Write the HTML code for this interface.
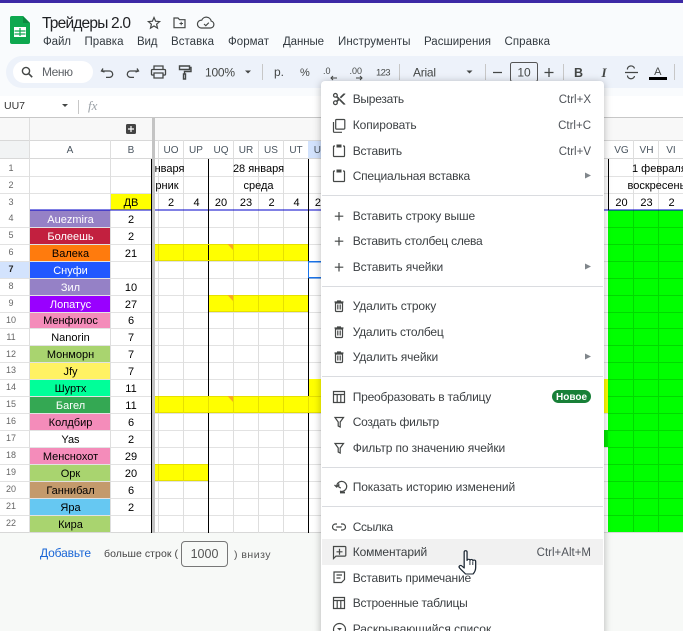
<!DOCTYPE html>
<html lang="ru"><head><meta charset="utf-8"><title>Трейдеры 2.0</title>
<style>
html,body{margin:0;padding:0;width:683px;height:631px;overflow:hidden;background:#f9fbfd}
svg{display:block;font-family:"Liberation Sans",sans-serif;filter:blur(.3px)}
.c{shape-rendering:crispEdges}
.m{font-size:12px;fill:#3c4043}
.s{font-size:11.5px;fill:#50545a;text-anchor:end}
.b{font-size:11.5px;fill:#333a40}
.n{font-size:9px;fill:#666;text-anchor:middle}
.h{font-size:10px;fill:#4a5560;text-anchor:middle}
.t{font-size:11px;fill:#000;text-anchor:middle}
.w{font-size:11px;fill:#fff;text-anchor:middle}
.i{fill:none;stroke:#444746;stroke-width:1.2}
.a{fill:#80868b}
</style></head><body>
<svg width="683" height="631" viewBox="0 0 683 631" xmlns="http://www.w3.org/2000/svg">
<!-- chrome backgrounds -->
<g class="c">
<rect width="683" height="631" fill="#f9fbfd"/>
<rect width="683" height="3" fill="#3d2aa6"/>
<rect x="0" y="96" width="683" height="21" fill="#fff"/>
<rect x="0" y="117" width="683" height="416" fill="#fff"/>
<rect x="0" y="533" width="683" height="98" fill="#f7f9f7"/>
<rect x="0" y="117" width="683" height="1" fill="#c7c7c7"/>
<rect x="0" y="118" width="683" height="22" fill="#f8f8f8"/>
<rect x="0" y="140" width="29" height="19" fill="#f1f3f4"/>
<rect x="308" y="140" width="14" height="19" fill="#d3e3fd"/>
<rect x="0" y="261" width="29" height="17" fill="#d3e3fd"/>
</g>
<rect x="6" y="56" width="700" height="32" rx="16" fill="#edf2fa"/>
<rect x="13" y="61" width="80" height="22" rx="11" fill="#fff"/>
<!-- logo -->
<path d="M12 16h11l7 7v19a2 2 0 0 1-2 2H12a2 2 0 0 1-2-2V18a2 2 0 0 1 2-2z" fill="#0ea84f"/>
<path d="M23 16l7 7h-7z" fill="#0b8a40"/>
<path d="M14 27h12v10H14z" fill="#fff"/>
<path d="M14.5 31h11M14.5 34h11M20 28v8" stroke="#0ea84f" stroke-width="1.2"/>
<text x="42" y="28" font-size="15.5px" fill="#202124" textLength="89">Трейдеры 2.0</text>
<!-- star folder cloud -->
<path d="M154 17.500l1.600 3.700 4 .35-3 2.650.9 3.900-3.500-2.100-3.500 2.100.9-3.900-3-2.650 4-.35z" fill="none" stroke="#444746" stroke-width="1.200"/>
<path d="M174 18h4l1.500 1.700h5.500v8h-11z" fill="none" stroke="#444746" stroke-width="1.200"/>
<path d="M179.500 23.500h3.500M181.200 21.800v3.500" stroke="#444746" stroke-width="1"/>
<path d="M201 28h9.500a3.500 3.500 0 0 0 .7-6.900 5 5 0 0 0-9.500-.9 3.900 3.900 0 0 0-.7 7.800z" fill="none" stroke="#444746" stroke-width="1.200"/>
<path d="M204 24l1.800 1.700 3-3" fill="none" stroke="#444746" stroke-width="1.100"/>
<!-- menu bar -->
<g class="b">
<text x="43" y="45" textLength="28">Файл</text>
<text x="84.500" y="45" textLength="39">Правка</text>
<text x="137" y="45" textLength="20.500">Вид</text>
<text x="171" y="45" textLength="43">Вставка</text>
<text x="228" y="45" textLength="41">Формат</text>
<text x="283" y="45" textLength="41">Данные</text>
<text x="338" y="45" textLength="72.500">Инструменты</text>
<text x="424" y="45" textLength="67">Расширения</text>
<text x="504.500" y="45" textLength="45.500">Справка</text>
</g>
<!-- toolbar -->
<circle cx="26" cy="71" r="3.600" fill="none" stroke="#444746" stroke-width="1.400"/>
<path d="M28.600 73.600l3.600 3.600" stroke="#444746" stroke-width="1.600"/>
<text x="42" y="76" font-size="12px" fill="#5f6368" textLength="31">Меню</text>
<path d="M103.500 69.500l-1.500 2.500 3 1M102.500 72h7.500a3.200 3.200 0 0 1 0 6.400h-3.500" fill="none" stroke="#444746" stroke-width="1.300" transform="translate(-.5 -1)"/>
<path d="M136.500 69.500l1.500 2.500-3 1M137.500 72H130a3.200 3.200 0 0 0 0 6.400h3.500" fill="none" stroke="#444746" stroke-width="1.300" transform="translate(.5 -1)"/>
<path d="M154 70v-4h9v4M154 75h-1.500a.8.8 0 0 1-1-1v-3.500a1 1 0 0 1 1-1h12a1 1 0 0 1 1 1V74a.8.8 0 0 1-1 1H163M154 73h9v5h-9z" fill="none" stroke="#444746" stroke-width="1.300"/>
<path d="M179.500 66h10v3.500h-10zM189.500 67.500h1.500v4h-6.500v2.500M183.500 74h2v5h-2z" fill="none" stroke="#444746" stroke-width="1.400"/>
<text x="205" y="76.500" font-size="12px" fill="#444746" textLength="30">100%</text>
<path d="M245 70.500h6l-3 3z" fill="#444746"/>
<g class="c" fill="#c7c7c7"><rect x="262" y="64" width="1" height="16"/><rect x="399" y="64" width="1" height="16"/><rect x="485" y="64" width="1" height="16"/><rect x="563" y="64" width="1" height="16"/><rect x="674" y="64" width="1" height="16"/></g>
<text x="274" y="76" font-size="12px" fill="#444746">р.</text>
<text x="300" y="76" font-size="11px" fill="#444746">%</text>
<text x="323" y="74" font-size="9px" fill="#444746">.0</text>
<path d="M337 78h-6M333 76l-2 2 2 2" fill="none" stroke="#444746" stroke-width="1"/>
<text x="349.500" y="74" font-size="9px" fill="#444746">.00</text>
<path d="M356 78h6M360 76l2 2-2 2" fill="none" stroke="#444746" stroke-width="1"/>
<text x="376" y="75.500" font-size="9.500px" fill="#444746" textLength="14.500">123</text>
<text x="413" y="76.500" font-size="12px" fill="#444746" textLength="23">Arial</text>
<path d="M466.500 70.500h6l-3 3z" fill="#444746"/>
<path d="M493 72.500h9M544.500 72.500h9M549 68v9" stroke="#444746" stroke-width="1.300"/>
<rect x="510.500" y="62.500" width="27" height="19" rx="2" fill="none" stroke="#555" stroke-width="1"/>
<text x="524" y="76.500" font-size="12px" fill="#444746" text-anchor="middle">10</text>
<text x="578.500" y="77" font-size="12.500px" fill="#444746" font-weight="bold" text-anchor="middle">B</text>
<text x="604" y="77" font-size="13px" fill="#444746" font-weight="bold" font-style="italic" text-anchor="middle" font-family="Liberation Serif">I</text>
<path d="M625 72.500h13M627.500 69.500a3.500 3 0 0 1 7 -1M627.500 75.500a3.500 3 0 0 0 7 .5" fill="none" stroke="#444746" stroke-width="1.200"/>
<text x="657.800" y="75" font-size="11px" fill="#444746" text-anchor="middle">A</text>
<rect class="c" x="649" y="77" width="18" height="3" fill="#000"/>
<!-- formula bar -->
<text x="4" y="109" font-size="10.500px" fill="#333">UU7</text>
<path d="M62 104h6l-3 3z" fill="#444746"/>
<rect class="c" x="78" y="100" width="1" height="14" fill="#c7c7c7"/>
<text x="88" y="110" font-size="13px" font-style="italic" fill="#9aa0a6" font-family="Liberation Serif">fx</text>
<!-- grid cells -->
<g class="c">
<rect x="111" y="193" width="40" height="17" fill="#ffff00"/>
<rect x="30" y="210" width="80" height="17" fill="#9581c6"/>
<rect x="30" y="227" width="80" height="17" fill="#c2203f"/>
<rect x="30" y="244" width="80" height="17" fill="#ff7b0d"/>
<rect x="30" y="261" width="80" height="17" fill="#2158ff"/>
<rect x="30" y="278" width="80" height="17" fill="#9581c6"/>
<rect x="30" y="295" width="80" height="17" fill="#9900ff"/>
<rect x="30" y="312" width="80" height="16" fill="#f48cba"/>
<rect x="30" y="345" width="80" height="17" fill="#a9d46f"/>
<rect x="30" y="362" width="80" height="17" fill="#fff263"/>
<rect x="30" y="379" width="80" height="17" fill="#00ff99"/>
<rect x="30" y="396" width="80" height="17" fill="#34a853"/>
<rect x="30" y="413" width="80" height="17" fill="#f48cba"/>
<rect x="30" y="447" width="80" height="17" fill="#f48cba"/>
<rect x="30" y="464" width="80" height="17" fill="#a9d46f"/>
<rect x="30" y="481" width="80" height="17" fill="#c49a6c"/>
<rect x="30" y="498" width="80" height="17" fill="#66c8f2"/>
<rect x="30" y="515" width="80" height="17" fill="#a9d46f"/>
<!-- grid lines -->
<path d="M0 176.500H683M0 193.500H683M0 227.500H683M0 244.500H683M0 261.500H683M0 278.500H683M0 295.500H683M0 312.500H683M0 328.500H683M0 345.500H683M0 362.500H683M0 379.500H683M0 396.500H683M0 413.500H683M0 430.500H683M0 447.500H683M0 464.500H683M0 481.500H683M0 498.500H683M0 515.500H683" stroke="#e2e2e2" stroke-width="1" fill="none"/>
<path d="M0 140.500H683M0 158.500H683M0 532.500H683" stroke="#d8d8d8" stroke-width="1"/>
<path d="M29.500 118V533M110.500 140V533M158.500 140V533M183.500 140V533M233.500 140V533M258.500 140V533M283.500 140V533M633.500 140V533M658.500 140V533" stroke="#dedede" stroke-width="1"/>
<!-- green -->
<rect x="608" y="210" width="75" height="322" fill="#00ff00"/>
<rect x="604" y="430" width="4" height="17" fill="#00e800"/>
<path d="M633.500 210V532M658.500 210V532M608 227.500H683M608 244.500H683M608 261.500H683M608 278.500H683M608 295.500H683M608 312.500H683M608 328.500H683M608 345.500H683M608 362.500H683M608 379.500H683M608 396.500H683M608 413.500H683M608 430.500H683M608 447.500H683M608 464.500H683M608 481.500H683M608 498.500H683M608 515.500H683" stroke="#00d900" stroke-width="1"/>
<!-- blue rule and black rules -->
<rect x="30" y="209.500" width="653" height="1" fill="#0000c8"/>
<rect x="152" y="118" width="3" height="415" fill="#c4c4c4"/>
<rect x="151" y="159" width="1" height="374" fill="#000"/>
<rect x="208" y="159" width="1" height="374" fill="#000"/>
<rect x="308" y="159" width="1" height="374" fill="#000"/>
<rect x="608" y="159" width="1" height="51" fill="#000"/>
<!-- yellow -->
<path d="M155 244h153v17H155zM209 295h99v17H209zM155 396h166v17H155zM155 464h53v17h-53zM309 379h12v17h-12zM604 379h4v34h-4z" fill="#ffff00"/>
<rect x="208" y="244" width="1" height="17" fill="#000"/>
<path d="M155 244.500H308M209 295.500H308M155 396.500H321M155 464.500H208M155 260.500H308M209 311.500H308M155 412.500H321M155 480.500H208" stroke="#e6e000" stroke-width="1"/>
<path d="M158.500 244V261M183.500 244V261M233.500 244V261M258.500 244V261M283.500 244V261M233.500 295V312M258.500 295V312M283.500 295V312M158.500 396V413M183.500 396V413M208.500 396V413M233.500 396V413M258.500 396V413M283.500 396V413M308.500 396V413M158.500 464V481M183.500 464V481" stroke="#e6e000" stroke-width="1"/>
<path d="M308.500 261.500H321M308.500 277.500H321" stroke="#1a73e8" stroke-width="1.500"/>
<path d="M308.500 261V278" stroke="#1a73e8" stroke-width="1"/>
</g>
<path d="M227.500 244h5.500v6zM227.500 295h5.500v6zM227.500 396h5.500v6z" fill="#f9a825"/>
<!-- add button -->
<rect x="126" y="124" width="10" height="10" rx="1.500" fill="#444"/>
<path d="M128 129h6M131 126v6" stroke="#fff" stroke-width="1.200"/>
<!-- column headers -->
<g class="h">
<text x="70" y="153">A</text><text x="131" y="153">B</text>
<text x="171" y="153">UO</text><text x="196" y="153">UP</text><text x="221" y="153">UQ</text><text x="246" y="153">UR</text><text x="271" y="153">US</text><text x="296" y="153">UT</text><text x="321" y="153">UU</text>
<text x="621.500" y="153">VG</text><text x="646.500" y="153">VH</text><text x="671" y="153">VI</text>
</g>
<!-- row numbers -->
<g class="n">
<text x="11" y="171">1</text><text x="11" y="188">2</text><text x="11" y="205">3</text><text x="11" y="221">4</text><text x="11" y="238">5</text><text x="11" y="255">6</text>
<text x="11" y="272" font-weight="bold" fill="#222">7</text><text x="11" y="289">8</text><text x="11" y="306">9</text><text x="11" y="323">10</text><text x="11" y="340">11</text><text x="11" y="357">12</text><text x="11" y="373">13</text><text x="11" y="390">14</text><text x="11" y="407">15</text><text x="11" y="424">16</text><text x="11" y="441">17</text><text x="11" y="458">18</text><text x="11" y="475">19</text><text x="11" y="492">20</text><text x="11" y="509">21</text><text x="11" y="526">22</text>
</g>
<!-- names -->
<g class="t">
<text x="70.500" y="223" class="w">Auezmira</text>
<text x="70.500" y="240" class="w">Болеешь</text>
<text x="70.500" y="257">Валека</text>
<text x="70.500" y="274" class="w">Снуфи</text>
<text x="70.500" y="291" class="w">Зил</text>
<text x="70.500" y="308" class="w">Лопатус</text>
<text x="70.500" y="324">Менфилос</text>
<text x="70.500" y="341">Nanorin</text>
<text x="70.500" y="358">Монморн</text>
<text x="70.500" y="375">Jfy</text>
<text x="70.500" y="392">Шуртх</text>
<text x="70.500" y="409" class="w">Багел</text>
<text x="70.500" y="426">Колдбир</text>
<text x="70.500" y="443">Yas</text>
<text x="70.500" y="460">Менснохот</text>
<text x="70.500" y="477">Орк</text>
<text x="70.500" y="494">Ганнибал</text>
<text x="70.500" y="511">Яра</text>
<text x="70.500" y="528">Кира</text>
<!-- col B -->
<text x="131" y="206">ДВ</text>
<text x="131" y="223">2</text><text x="131" y="240">2</text><text x="131" y="257">21</text><text x="131" y="291">10</text><text x="131" y="308">27</text><text x="131" y="324">6</text><text x="131" y="341">7</text><text x="131" y="358">7</text><text x="131" y="375">7</text><text x="131" y="392">11</text><text x="131" y="409">11</text><text x="131" y="426">6</text><text x="131" y="443">2</text><text x="131" y="460">29</text><text x="131" y="477">20</text><text x="131" y="494">6</text><text x="131" y="511">2</text>
<!-- headers -->
<text x="169.500" y="172">нваря</text>
<text x="167" y="189">рник</text>
<text x="258.500" y="172">28 января</text>
<text x="258.500" y="189">среда</text>
<text x="171" y="206">2</text><text x="196.500" y="206">4</text><text x="221" y="206">20</text><text x="246" y="206">23</text><text x="271.500" y="206">2</text><text x="296.500" y="206">4</text><text x="321" y="206">20</text>
<text x="621.500" y="206">20</text><text x="646.500" y="206">23</text><text x="671.500" y="206">2</text>
<text x="632" y="172" style="text-anchor:start">1 февраля</text>
<text x="627.500" y="189" style="text-anchor:start">воскресенье</text>
</g>
<!-- bottom add rows -->
<text x="40" y="557" font-size="12px" fill="#1a66d6" textLength="51">Добавьте</text>
<text x="104" y="557" font-size="10.500px" fill="#444" textLength="74">больше строк (</text>
<rect x="181.500" y="541.500" width="46" height="25" rx="3.500" fill="none" stroke="#777" stroke-width="1"/>
<text x="204.500" y="558" font-size="12.500px" fill="#555" text-anchor="middle">1000</text>
<text x="234" y="558" font-size="10.500px" fill="#555" textLength="36.500">) внизу</text>
<!-- context menu -->
<rect x="321" y="81" width="283" height="570" rx="4" fill="#fff" style="filter:drop-shadow(0 1px 4px rgba(0,0,0,.28))"/>
<rect class="c" x="322" y="539" width="281" height="26" fill="#f1f1f1"/>
<g class="c" fill="#dadce0">
<rect x="322" y="195" width="281" height="1"/><rect x="322" y="286" width="281" height="1"/><rect x="322" y="376" width="281" height="1"/><rect x="322" y="467" width="281" height="1"/><rect x="322" y="506" width="281" height="1"/>
</g>
<g class="m">
<text x="352.700" y="103" textLength="51.500">Вырезать</text>
<text x="352.700" y="129" textLength="64">Копировать</text>
<text x="352.700" y="155" textLength="49.500">Вставить</text>
<text x="352.700" y="180" textLength="117.500">Специальная вставка</text>
<text x="352.700" y="220" textLength="122.500">Вставить строку выше</text>
<text x="352.700" y="245" textLength="130">Вставить столбец слева</text>
<text x="352.700" y="271" textLength="90.500">Вставить ячейки</text>
<text x="352.700" y="310" textLength="83.500">Удалить строку</text>
<text x="352.700" y="336" textLength="91">Удалить столбец</text>
<text x="352.700" y="361" textLength="85.500">Удалить ячейки</text>
<text x="352.700" y="401" textLength="138.500">Преобразовать в таблицу</text>
<text x="352.700" y="426" textLength="86.500">Создать фильтр</text>
<text x="352.700" y="452" textLength="152.500">Фильтр по значению ячейки</text>
<text x="352.700" y="491" textLength="162.500">Показать историю изменений</text>
<text x="352.700" y="531" textLength="40.500">Ссылка</text>
<text x="352.700" y="556" textLength="74.500">Комментарий</text>
<text x="352.700" y="582" textLength="118.500">Вставить примечание</text>
<text x="352.700" y="607" textLength="115">Встроенные таблицы</text>
<text x="352.700" y="633" textLength="138.500">Раскрывающийся список</text>
</g>
<g class="s">
<text x="591" y="103">Ctrl+X</text><text x="591" y="129">Ctrl+C</text><text x="591" y="155">Ctrl+V</text><text x="591" y="556">Ctrl+Alt+M</text>
</g>
<path class="a" d="M585 172.500l6 3-6 3zM585 263.500l6 3-6 3zM585 353.500l6 3-6 3z"/>
<rect x="552" y="390" width="39" height="13" rx="6.500" fill="#188038"/>
<text x="571.500" y="400" font-size="10px" font-weight="bold" fill="#fff" text-anchor="middle">Новое</text>
<!-- menu icons -->
<path transform="translate(331.700 91.600) scale(.62)" fill="#444746" d="M9.640 7.640c.23-.5.36-1.050.36-1.640 0-2.210-1.790-4-4-4S2 3.790 2 6s1.790 4 4 4c.59 0 1.140-.13 1.640-.36L10 12l-2.360 2.360C7.140 14.130 6.590 14 6 14c-2.210 0-4 1.790-4 4s1.790 4 4 4 4-1.790 4-4c0-.59-.13-1.140-.36-1.640L12 14l7 7h3v-1L9.640 7.640zM6 8c-1.100 0-2-.89-2-2s.9-2 2-2 2 .89 2 2-.9 2-2 2zm0 12c-1.100 0-2-.89-2-2s.9-2 2-2 2 .89 2 2-.9 2-2 2zm6-7.500c-.28 0-.5-.22-.5-.5s.22-.5.5-.5.5.22.5.5-.22.5-.5.5zM19 3l-6 6 2 2 7-7V3z"/>
<g class="i">
<path d="M336.500 119.500h7.500a.8.8 0 0 1 .8.8v8a.8.8 0 0 1-.8.8h-7.500a.8.8 0 0 1-.8-.8v-8a.8.8 0 0 1 .8-.8zM333.500 122v9.500a.8.8 0 0 0 .8.8h7.700"/>
<path d="M335 146h-.7a.8.8 0 0 0-.8.8v8.900a.8.8 0 0 0 .8.8h9.400a.8.8 0 0 0 .8-.8v-8.900a.8.8 0 0 0-.8-.8H343"/>
<rect x="336.500" y="144.500" width="5" height="3" fill="#444746" stroke="none"/>
<path d="M335 171h-.7a.8.8 0 0 0-.8.8v8.900a.8.8 0 0 0 .8.8h9.400a.8.8 0 0 0 .8-.8v-8.900a.8.8 0 0 0-.8-.8H343"/>
<rect x="336.500" y="169.500" width="5" height="3" fill="#444746" stroke="none"/>
<path d="M339 212v8.500M334.800 216.200h8.500M339 237v8.500M334.800 241.200h8.500M339 263v8.500M334.800 267.200h8.500"/>
<path d="M335.500 303h7v7.500a1 1 0 0 1-1 1h-5a1 1 0 0 1-1-1zM334.500 302h9M337 301h4M337.800 304.500v5M340.200 304.500v5"/>
<path d="M335.500 329h7v7.500a1 1 0 0 1-1 1h-5a1 1 0 0 1-1-1zM334.500 328h9M337 327h4M337.800 330.500v5M340.200 330.500v5"/>
<path d="M335.500 354h7v7.500a1 1 0 0 1-1 1h-5a1 1 0 0 1-1-1zM334.500 353h9M337 352h4M337.800 355.500v5M340.200 355.500v5"/>
<path d="M333.500 391.500h11v11h-11zM333.500 394.500h11M337.200 394.500v8M340.800 394.500v8"/>
<path d="M335 417.500h8.500l-3.300 4.500v5l-2-1v-4z"/>
<path d="M335 443.500h8.500l-3.300 4.500v5l-2-1v-4z"/>
<path d="M336.700 486.500a5 5 0 1 1 3.300 4.600M338.800 483.500v3.400l2 1.200M334.500 485l2.200 2 2-2"/>
<path d="M340 492.500h5" stroke-width="1.800"/>
<path d="M337 524h-1.500a3 3 0 0 0 0 6h1.500M341 524h1.500a3 3 0 0 1 0 6H341M336.300 527h5.400"/>
<path d="M333.500 546.500h11.500a.8.8 0 0 1 .8.8v8a.8.8 0 0 1-.8.8h-9l-2.500 2.500z"/>
<path d="M339.500 548.800v6M336.500 551.800h6"/>
<path d="M334 572h10.500v7.500l-3 3H334zM336.500 575h5.500M336.500 578h4"/>
<path d="M333.500 597.500h11v11h-11zM333.500 600.500h11M337.200 600.500v8M340.800 600.500v8"/>
<circle cx="339.500" cy="629.500" r="6"/>
<path d="M337 628h5l-2.500 2.500z" fill="#444746" stroke="none"/>
</g>
<!-- hand cursor -->
<g transform="translate(459 551) scale(1.150 1) translate(-459 -552.500)">
<path d="M463.500 553.500c0-1.800 2.500-1.800 2.500 0v8.500c.1-1.800 2.600-1.500 2.600 0 .1-1.500 2.500-1.300 2.500.3.3-1.200 2.400-1 2.400.7v6c0 3.500-1.500 5.500-2.300 6.500h-6.500c-1.200-1.500-3.200-3.500-5.200-6-1.300-1.800.7-3.300 2-2l2 2z" fill="#fff" stroke="#1c2733" stroke-width="1.100" stroke-linejoin="round"/>
<path d="M468.500 562.500v4M471 563v3.500" stroke="#1c2733" stroke-width=".8"/>
</g>
</svg>
</body></html>
